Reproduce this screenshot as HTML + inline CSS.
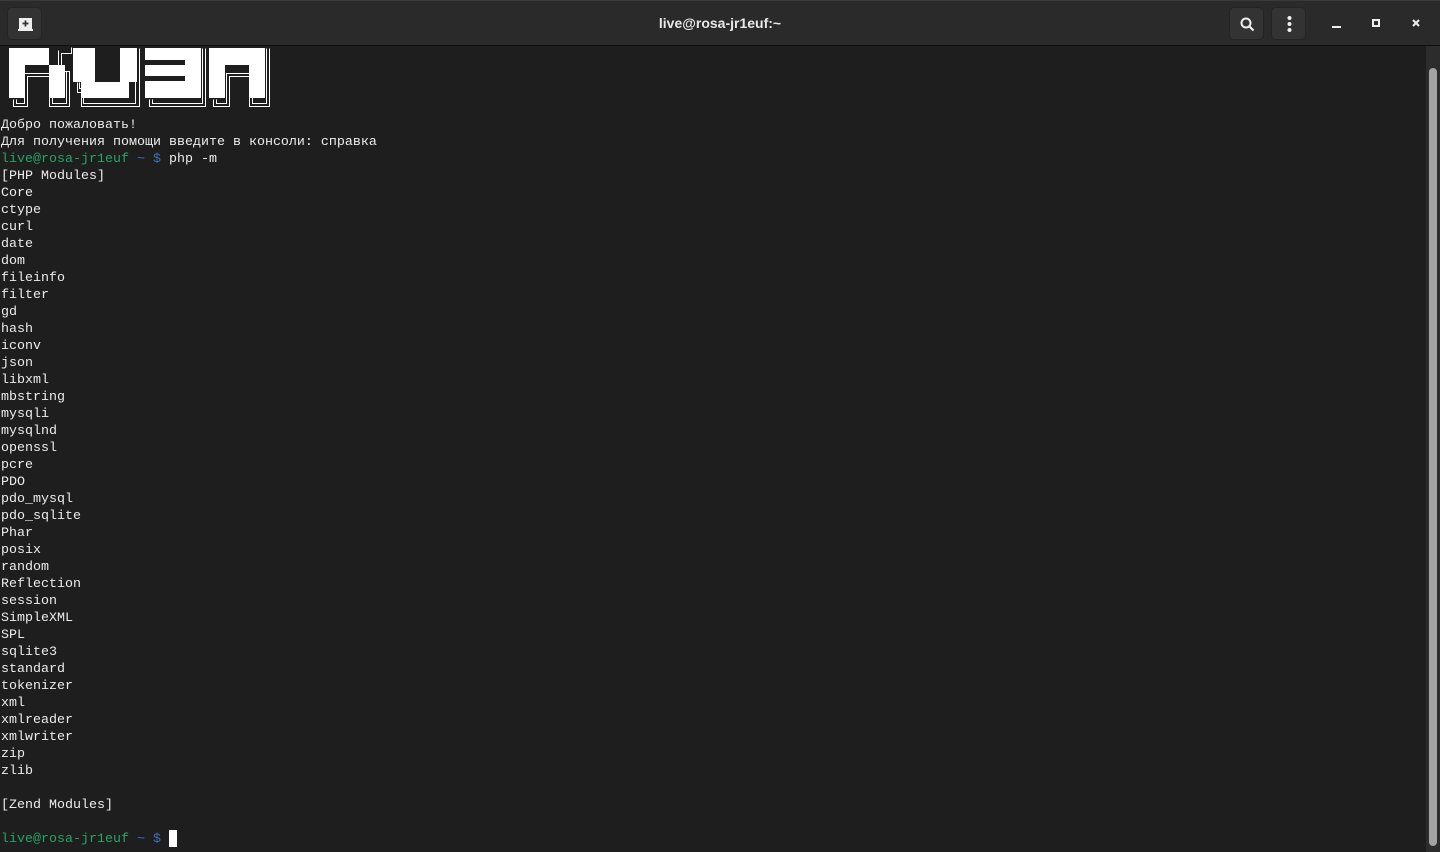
<!DOCTYPE html>
<html><head><meta charset="utf-8"><style>
*{margin:0;padding:0;box-sizing:border-box}
body{width:1440px;height:852px;background:#1e1e1e;overflow:hidden;position:relative;font-family:"Liberation Mono","DejaVu Sans Mono",monospace}
.hb{position:absolute;left:0;top:0;width:1440px;height:46px;background:#2a2a2a;border-bottom:1px solid #0e0e0e;border-top:1px solid #3a3a3a}
.title{position:absolute;left:0;right:0;top:14px;text-align:center;color:#e8e8e8;font:bold 14px "Liberation Sans",sans-serif}
.btn{position:absolute;top:6px;width:35px;height:33px;background:#333;border-radius:5px;border:1px solid #242424}
.term{position:absolute;left:1px;top:117px;font-size:13.33px;line-height:17px;color:#ececec;white-space:pre}
.g{color:#26a269}.b{color:#3f6fb5}
.cur{position:absolute;left:169px;top:830px;width:8px;height:17px;background:#fff}
.track{position:absolute;left:1426px;top:46px;width:14px;height:806px;background:#2c2c2c}
.thumb{position:absolute;left:1429px;top:68px;width:8px;height:778px;background:#a3a3a3;border-radius:4px}
</style></head><body>
<div class="hb">
<div class="btn" style="left:7px"><svg width="35" height="33" viewBox="0 0 35 33"><path d="M11 10h13v11h-13z" fill="#eee"/><path d="M10 22h15" stroke="#eee" stroke-width="2"/><path d="M17.5 12.5v6M14.5 15.5h6" stroke="#333" stroke-width="1.8"/></svg></div>
<div class="title">live@rosa-jr1euf:~</div>
<div class="btn" style="left:1229px"><svg width="35" height="33" viewBox="0 0 35 33"><circle cx="16" cy="15" r="4.5" fill="none" stroke="#eee" stroke-width="2"/><path d="M19.5 18.5l4 4" stroke="#eee" stroke-width="2.2"/></svg></div>
<div class="btn" style="left:1271px"><svg width="35" height="33" viewBox="0 0 35 33" fill="#eee"><circle cx="17.5" cy="10" r="2"/><circle cx="17.5" cy="16" r="2"/><circle cx="17.5" cy="22" r="2"/></svg></div>
<svg style="position:absolute;left:1320px;top:6px" width="120" height="33" viewBox="0 0 120 33"><path d="M12 20h9" stroke="#eee" stroke-width="2"/><rect x="53" y="13" width="6" height="6" fill="none" stroke="#eee" stroke-width="2"/><path d="M93 13l6 6M99 13l-6 6" stroke="#eee" stroke-width="2"/></svg>
</div>
<svg style="position:absolute;left:0;top:47px" width="280" height="65" viewBox="0 47 280 65">
<g fill="none" stroke="#fff" stroke-width="1">
<path d="M13.5 99.5v7h14v-30h22v30h20v-35h-8v-18h10v-6"/><path d="M16.5 99.5v4h8v-30h28v30h14v-32h-8v-21"/>
<path d="M77.5 82.5v10h4v14h58v-58"/><path d="M79.5 82.5v6h4v15h52v-55"/>
<path d="M149.5 99.5v7h56v-58"/><path d="M152.5 99.5v4h50v-55"/>
<path d="M213.5 99.5v7h16v-30h20v30h20v-58"/><path d="M216.5 99.5v4h10v-30h26v30h14v-55"/>
</g>
<g fill="#fff">
<path d="M9 48h40v17h16v33h-16v-33h-24v33h-16z"/>
<path d="M73 48h22v34h25v-34h17v34h-8v16h-48v-16h-8z"/>
<path d="M145 48h56v50h-56v-17h40v-5h-40v-11h40v-5h-40z"/>
<path d="M209 48h56v50h-16v-33h-24v33h-16z"/>
</g>
</svg>
<div class="term">Добро пожаловать!
Для получения помощи введите в консоли: справка
<span class="g">live@rosa-jr1euf</span> <span class="b">~ $</span> php -m
[PHP Modules]
Core
ctype
curl
date
dom
fileinfo
filter
gd
hash
iconv
json
libxml
mbstring
mysqli
mysqlnd
openssl
pcre
PDO
pdo_mysql
pdo_sqlite
Phar
posix
random
Reflection
session
SimpleXML
SPL
sqlite3
standard
tokenizer
xml
xmlreader
xmlwriter
zip
zlib

[Zend Modules]

<span class="g">live@rosa-jr1euf</span> <span class="b">~ $</span> </div>
<div class="cur"></div>
<div class="track"></div><div class="thumb"></div>
</body></html>
